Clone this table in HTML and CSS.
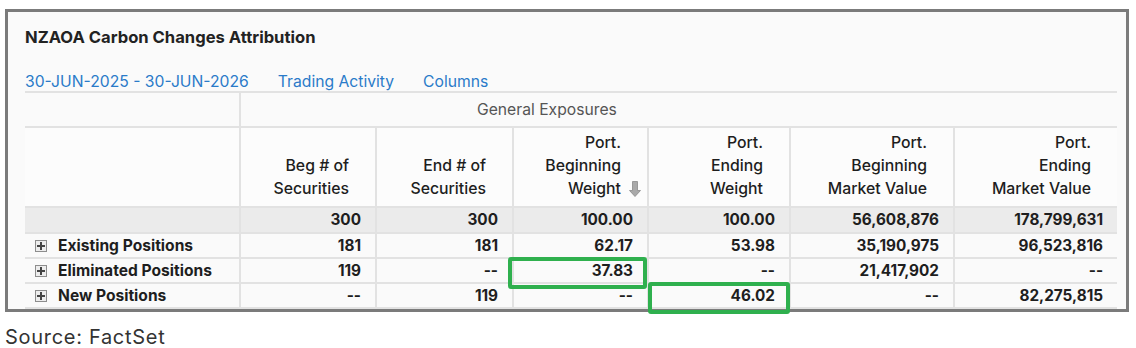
FILE: index.html
```html
<!DOCTYPE html>
<html>
<head>
<meta charset="utf-8">
<link rel="stylesheet" href="styles.css">
</head>
<body>
<div class="frame">
  <div class="title">NZAOA Carbon Changes Attribution</div>
  <div class="links">
    <a class="link">30-JUN-2025 - 30-JUN-2026</a>
    <a class="link">Trading Activity</a>
    <a class="link">Columns</a>
  </div>
  <table class="grid">
    <colgroup>
      <col class="c0"><col class="c1"><col class="c2"><col class="c3"><col class="c4"><col class="c5"><col class="c6">
    </colgroup>
    <tr class="group">
      <td></td>
      <td colspan="6" class="group-label">General Exposures</td>
    </tr>
    <tr class="head">
      <th></th>
      <th>Beg # of<br>Securities</th>
      <th>End # of<br>Securities</th>
      <th>Port.<br>Beginning<br>Weight<span class="sort"><svg width="12" height="16" viewBox="0 0 12 16"><path d="M3.5 0.5h5v9h3L6 15.5 0.5 9.5h3z" fill="#a9a9a9" stroke="#8a8a8a" stroke-width="0.8"/></svg></span></th>
      <th>Port.<br>Ending<br>Weight</th>
      <th>Port.<br>Beginning<br>Market Value</th>
      <th>Port.<br>Ending<br>Market Value</th>
    </tr>
    <tr class="row total">
      <td></td>
      <td>300</td><td>300</td><td>100.00</td><td>100.00</td><td>56,608,876</td><td>178,799,631</td>
    </tr>
    <tr class="row">
      <td class="label"><span class="plus"></span>Existing Positions</td>
      <td>181</td><td>181</td><td>62.17</td><td>53.98</td><td>35,190,975</td><td>96,523,816</td>
    </tr>
    <tr class="row">
      <td class="label"><span class="plus"></span>Eliminated Positions</td>
      <td>119</td><td>--</td><td class="hl"><span class="box box-a"></span>37.83</td><td>--</td><td>21,417,902</td><td>--</td>
    </tr>
    <tr class="row">
      <td class="label"><span class="plus"></span>New Positions</td>
      <td>--</td><td>119</td><td>--</td><td class="hl"><span class="box box-b"></span>46.02</td><td>--</td><td>82,275,815</td>
    </tr>
  </table>
</div>
<div class="source">Source: FactSet</div>
</body>
</html>
```
FILE: styles.css
```css
html, body {
  margin: 0;
  padding: 0;
  background: #ffffff;
}
body {
  font-family: Inter, "Open Sans", sans-serif;
  color: #222;
}
.frame {
  margin: 9px 0 0 5px;
  width: 1118px;
  height: 297px;
  border: 3px solid #7b7b7b;
  background: #fafafa;
  position: relative;
}
.title {
  padding: 15px 0 0 17px;
  height: 20px;
  line-height: 20px;
  font-size: 16.6px;
  font-weight: 700;
  color: #222;
}
.links {
  display: flex;
  gap: 29px;
  padding: 26px 0 0 17px;
  height: 17px;
  line-height: 17px;
  font-size: 15.7px;
}
.link {
  color: #2a7bc9;
}
.grid {
  margin: 1px 0 0 17px;
  border-collapse: collapse;
  table-layout: fixed;
  width: 1092px;
  font-size: 15.3px;
}
.c0 { width: 215px; }
.c1 { width: 136px; }
.c2 { width: 137px; }
.c3 { width: 135px; }
.c4 { width: 142px; }
.c5 { width: 164px; }
.c6 { width: 163px; }
.grid td, .grid th {
  border: 2px solid #e2e2e2;
  padding: 0 14px 0 0;
  text-align: right;
  white-space: nowrap;
  line-height: 20px;
}
.grid tr > :first-child { border-left: none; }
.grid tr > :last-child { border-right: none; }
.grid tr.group { height: 35px; }
.grid tr.head { height: 80px; }
.grid tr.row { height: 25px; }
.grid tr.total { height: 26px; }
.group td {
  background: #fafafa;
}
.grid .group-label {
  text-align: left;
  padding: 1px 0 0 236px;
  font-weight: 400;
  color: #555;
  font-size: 15.7px;
}
.grid .head th {
  vertical-align: bottom;
  font-weight: 500;
  font-size: 15.8px;
  line-height: 23px;
  padding: 0 26px 6px 0;
  color: #1e1e1e;
  background: #fcfcfc;
}
.sort {
  display: inline-block;
  width: 12px;
  margin: 0 -20px 0 8px;
  vertical-align: -3px;
}
.sort svg { display: block; }
.total td {
  background: #ebebeb;
}
.row td {
  font-weight: 700;
  color: #1e1e1e;
}
.grid .label {
  text-align: left;
  padding-left: 10px;
  font-size: 15.6px;
}
.plus {
  display: inline-block;
  width: 10px;
  height: 10px;
  border: 1px solid #8d8d8d;
  background: #ededed linear-gradient(#444, #444) center / 8px 2px no-repeat;
  margin-right: 11px;
  vertical-align: -1px;
  position: relative;
}
.plus::after {
  content: "";
  position: absolute;
  left: 4px;
  top: 1px;
  width: 2px;
  height: 8px;
  background: #444;
}
.hl { position: relative; }
.box {
  position: absolute;
  border: 4px solid #2fb04e;
  border-radius: 3px;
  box-sizing: border-box;
}
.box-a {
  left: -6px;
  top: -2px;
  width: 139px;
  height: 32px;
}
.box-b {
  left: -1px;
  top: -2px;
  width: 142px;
  height: 32px;
}
.source {
  padding: 13px 0 0 5px;
  font-family: Inter, "Open Sans", sans-serif;
  font-size: 20px;
  letter-spacing: 0.7px;
  color: #333;
}
```
